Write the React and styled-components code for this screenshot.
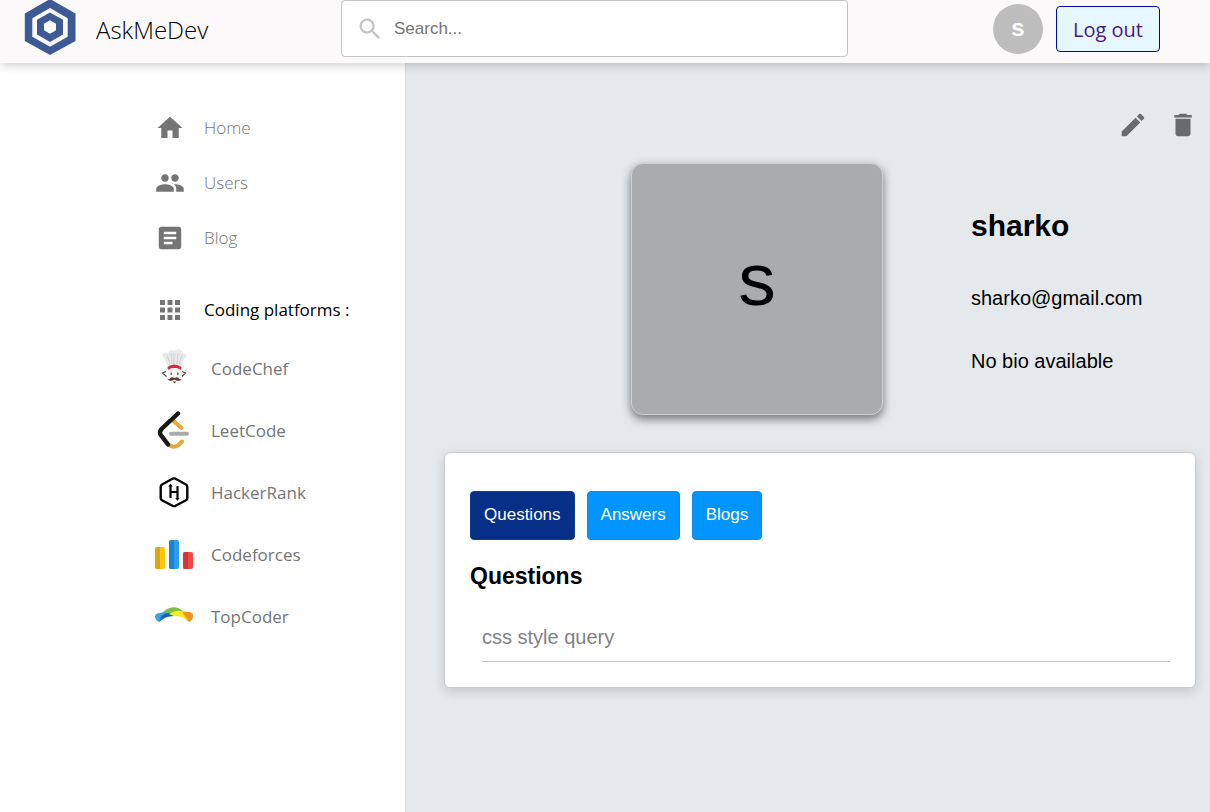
import React from "react";
import styled, { createGlobalStyle } from "styled-components";
import {
  MdHome, MdPeople, MdArticle, MdApps, MdEdit, MdDelete, MdSearch,
} from "react-icons/md";

const sans = `"Liberation Sans", Arial, sans-serif`;
const human = `"Segoe UI", "Open Sans", "Noto Sans", sans-serif`;

const GlobalStyle = createGlobalStyle`
  *, *::before, *::after { box-sizing: border-box; }
  body { margin: 0; background: #e5e9ec; font-family: ${sans}; color: #000; }
  h1, h2, p, ul { margin: 0; padding: 0; }
  ul { list-style: none; }
  a { color: inherit; text-decoration: none; }
  button { font-family: inherit; cursor: pointer; }
  svg { display: block; flex: none; }
`;

const Page = styled.div`
  display: flex;
  flex-direction: column;
  min-height: 100vh;
`;

const Header = styled.header`
  display: grid;
  grid-template-columns: 341fr 507fr 362fr;
  align-items: start;
  height: 63px;
  background: #fcf9fa;
  box-shadow: 0 2px 10px rgba(0, 0, 0, 0.2);
  z-index: 1;
`;

const Brand = styled.a`
  display: flex;
  align-items: flex-start;
  gap: 20px;
  padding-left: 24px;
  font-family: ${human};
  font-size: 24px;
  font-weight: 300;
  line-height: 60px;
`;

const SearchBox = styled.label`
  display: flex;
  align-items: center;
  gap: 10px;
  height: 57px;
  padding: 0 14px;
  background: #fff;
  border: 1px solid #c4c4c4;
  border-radius: 4px;
  color: #c4c4c4;
`;

const SearchInput = styled.input`
  flex: 1;
  min-width: 0;
  padding: 0;
  border: 0;
  outline: 0;
  background: none;
  font: 17px ${sans};
  color: #222;
  &::placeholder { color: #757575; opacity: 1; }
`;

const Account = styled.div`
  display: flex;
  justify-content: flex-end;
  gap: 13px;
  padding: 4px 50px 0 0;
`;

const AvatarBadge = styled.div`
  display: grid;
  place-items: center;
  width: 50px;
  height: 50px;
  border-radius: 50%;
  background: #bdbdbd;
  color: #fff;
  font-size: 24px;
  font-weight: 700;
  line-height: 26px;
  padding-bottom: 2px;
`;

const LogoutButton = styled.button`
  height: 46px;
  margin-top: 2px;
  padding: 0 16px;
  border: 1px solid #0808a0;
  border-radius: 4px;
  background: #e6f7ff;
  color: #45207c;
  && { font-family: ${human}; }
  font-size: 20px;
  white-space: nowrap;
`;

const Body = styled.div`
  flex: 1;
  display: grid;
  grid-template-columns: 406fr 804fr;
`;

const Sidebar = styled.nav`
  padding: 37px 0 0 155px;
  background: #fff;
  border-right: 1px solid #d8dcdf;
  font-family: ${human};
  color: #757575;
`;

const NavLink = styled.a`
  display: flex;
  align-items: center;
  gap: 19px;
  height: 55px;
  font-size: 17px;
  font-weight: 300;
`;

const SectionTitle = styled.div`
  display: flex;
  align-items: center;
  gap: 19px;
  height: 55px;
  margin-top: 17px;
  font-size: 17px;
  white-space: nowrap;
  span { color: #000; }
`;

const PlatformLink = styled.a`
  display: flex;
  align-items: center;
  gap: 18px;
  height: 62px;
  font-size: 17px;
`;

const Main = styled.main`
  padding: 47px 14px 40px 38px;
`;

const Actions = styled.div`
  display: flex;
  justify-content: flex-end;
  gap: 20px;
`;

const IconButton = styled.button`
  padding: 0;
  border: 0;
  background: none;
  color: #676b6e;
  & + & { margin-right: -2px; }
`;

const Profile = styled.section`
  display: flex;
  justify-content: flex-end;
  gap: 88px;
  margin: 23px 0 37px;
`;

const ProfilePicture = styled.div`
  display: grid;
  place-items: center;
  flex: none;
  width: 252px;
  height: 252px;
  padding-bottom: 20px;
  border: 1px solid #cfd1d2;
  border-radius: 12px;
  background: #aaabad;
  box-shadow: 0 4px 10px rgba(0, 0, 0, 0.5);
  font-size: 75px;
`;

const ProfileDetails = styled.div`
  display: flex;
  flex-direction: column;
  gap: 40px;
  width: 225px;
  padding-top: 46px;
  font-size: 20px;
  line-height: 23px;
`;

const Name = styled.h1`
  margin-bottom: 4px;
  font-size: 30px;
  line-height: 34px;
`;

const Card = styled.section`
  padding: 38px 25px 25px;
  background: #fff;
  border: 1px solid #c8cacc;
  border-radius: 6px;
  box-shadow: 0 4px 12px rgba(0, 0, 0, 0.14);
`;

const Tabs = styled.div`
  display: flex;
  gap: 12px;
`;

const Tab = styled.button`
  height: 49px;
  padding: 0 13px 2px;
  border: 1px solid ${(p) => (p.$active ? "#0b3f91" : "#0e8aea")};
  border-radius: 4px;
  background: ${(p) => (p.$active ? "#062f87" : "#0295ff")};
  color: #fff;
  font-size: 17px;
`;

const CardTitle = styled.h2`
  margin-top: 23px;
  font-size: 23px;
  line-height: 27px;
`;

const QuestionList = styled.ul`
  margin: 23px 0 0 12px;
`;

const Question = styled.li`
  padding: 13px 0 12px;
  border-bottom: 1px solid #c6c6c6;
  color: #828282;
  font-size: 20px;
  line-height: 23px;
`;

const BrandLogo = () => (
  <svg width="52" height="56" viewBox="0 0 52 56" aria-hidden="true">
    <path
      fill="#3d5a94"
      fillRule="evenodd"
      d="M26-1 51.500 13.500V41L26 55 .8 41V13.500ZM26 8 8.300 18.300V36.700L26 46.700 43.700 36.700V18.300Z"
    />
    <path
      fill="#3d5a94"
      fillRule="evenodd"
      d="M26 12.500 39 19.800V34.600L26 42 13 34.600V19.800ZM26 20.200 20 23.700V30.300L26 33.800 32 30.300V23.700Z"
    />
  </svg>
);

const CodeChefLogo = () => (
  <svg width="38" height="38" viewBox="0 0 38 38" aria-hidden="true">
    <path fill="#e9e9ec" d="M13 18 9 9C5 6 9 2 13 4 14 0 18 0 20 2 24-1 28 1 28 4 32 4 33 8 29 10L26 18Q19 14 13 18Z" />
    <path fill="none" stroke="#c6c7cd" strokeWidth=".7" d="m15 15-3-9m5 9-1-11m3 11V4m3 11 1-11m1 11 3-9" />
    <path fill="#d9283a" d="M12.500 18Q19 13 26.500 18L26 21Q19 17 13 21Z" />
    <path fill="#faf6f4" d="M13 21Q19 17 26 21V28Q25 33 19 33T13 28Z" />
    <path fill="none" stroke="#54433f" strokeWidth="1.100" d="M11 22.500 7.500 24 11.500 27.500M27 22.500l3.500 1.500L27 27.500" />
    <path fill="#77706e" d="M15.500 23.500h1.600V26h-1.600zM22 23.500h1.600V26H22z" />
    <path fill="#51413e" d="M19.500 29Q16 27 14.500 30 13 30.500 12 29.500 14 33.500 19.500 30.800 25 33.500 27 29.500 26 30.500 24.500 30 23 27 19.500 29ZM17.800 32.500h3.600l-1.800 2Z" />
  </svg>
);

const LeetCodeLogo = () => (
  <svg width="38" height="38" viewBox="0 0 38 38" fill="none" strokeLinecap="round" aria-hidden="true">
    <path stroke="#e3a83b" strokeWidth="4" d="m18 9.500 8.500 7.500M27 30.500 23.500 34Q18 38 13 33" />
    <path stroke="#181818" strokeWidth="4.400" d="M23 2.500 6.500 18Q3.500 21.500 6.500 25L13 33.500" />
    <path stroke="#aaa" strokeWidth="4" d="M16 22.700H32" />
  </svg>
);

const HackerRankLogo = () => (
  <svg width="38" height="38" viewBox="0 0 38 38" aria-hidden="true">
    <path fill="none" stroke="#050505" strokeWidth="2.400" strokeLinejoin="round" d="M17.500 5.700Q19 5 20.500 5.700L31 11.500Q32.300 12.300 32.300 14V25Q32.300 26.500 31 27.300L20.500 32.800Q19 33.500 17.500 32.800L7 27.300Q5.700 26.500 5.700 25V14Q5.700 12.300 7 11.500Z" />
    <path fill="none" stroke="#050505" strokeWidth="2.200" d="M15.500 12V25M22.500 13V26M15.500 19h7" />
    <path fill="#050505" d="m13.200 13.500 2.300-2.800 2.300 2.800ZM20.200 25l2.300 2.800 2.300-2.800Z" />
  </svg>
);

const CodeforcesLogo = () => (
  <svg width="38" height="38" viewBox="0 0 38 38" aria-hidden="true">
    <rect x="0" y="12" width="10" height="22" rx="2" fill="#fac70d" />
    <path fill="#dba90a" d="M2 12h3v22H2a2 2 0 0 1-2-2V14a2 2 0 0 1 2-2Z" />
    <rect x="14" y="5" width="10" height="29" rx="2" fill="#2c9ced" />
    <path fill="#1c82d2" d="M16 5h3v29h-3a2 2 0 0 1-2-2V7a2 2 0 0 1 2-2Z" />
    <rect x="28" y="17" width="10" height="17" rx="2" fill="#f04844" />
    <path fill="#d43737" d="M30 17h3v17h-3a2 2 0 0 1-2-2V19a2 2 0 0 1 2-2Z" />
  </svg>
);

const TopCoderLogo = () => (
  <svg width="38" height="38" viewBox="0 0 38 38" aria-hidden="true">
    <path fill="#38a5dc" d="M0 19Q1 16 5 16L13 14 4 25Q0 23 0 19Z" />
    <path fill="#1d62ad" d="M4 25Q6 17 14 15L19 19Q10 19 4 25Z" />
    <path fill="#82bd41" d="M8 15Q19 6 28 14.500L19 19Q14 15 8 15Z" />
    <path fill="#f8ed22" d="M14 17Q21 12 28 14.500L34 25Q26 18 19 19Z" />
    <path fill="#f39324" d="M27 14.500 35 15Q38 16 38 19 38 23 34 25 30 20 27 14.500Z" />
  </svg>
);

const links = [
  ["Home", MdHome],
  ["Users", MdPeople],
  ["Blog", MdArticle],
];

const platforms = [
  ["CodeChef", CodeChefLogo],
  ["LeetCode", LeetCodeLogo],
  ["HackerRank", HackerRankLogo],
  ["Codeforces", CodeforcesLogo],
  ["TopCoder", TopCoderLogo],
];

const tabs = ["Questions", "Answers", "Blogs"];

export default function App() {
  return (
    <Page>
      <GlobalStyle />
      <Header>
        <Brand href="#"><BrandLogo />AskMeDev</Brand>
        <SearchBox>
          <MdSearch size={28} />
          <SearchInput type="search" placeholder="Search..." aria-label="Search" />
        </SearchBox>
        <Account>
          <AvatarBadge>s</AvatarBadge>
          <LogoutButton type="button">Log out</LogoutButton>
        </Account>
      </Header>
      <Body>
        <Sidebar>
          {links.map(([label, Icon]) => (
            <NavLink href="#" key={label}><Icon size={30} />{label}</NavLink>
          ))}
          <SectionTitle><MdApps size={30} /><span>Coding platforms :</span></SectionTitle>
          {platforms.map(([label, Logo]) => (
            <PlatformLink href="#" key={label}><Logo />{label}</PlatformLink>
          ))}
        </Sidebar>
        <Main>
          <Actions>
            <IconButton type="button" aria-label="Edit profile"><MdEdit size={30} /></IconButton>
            <IconButton type="button" aria-label="Delete profile"><MdDelete size={30} /></IconButton>
          </Actions>
          <Profile>
            <ProfilePicture>s</ProfilePicture>
            <ProfileDetails>
              <Name>sharko</Name>
              <p>sharko@gmail.com</p>
              <p>No bio available</p>
            </ProfileDetails>
          </Profile>
          <Card>
            <Tabs>
              {tabs.map((label, i) => (
                <Tab type="button" key={label} $active={i === 0}>{label}</Tab>
              ))}
            </Tabs>
            <CardTitle>Questions</CardTitle>
            <QuestionList>
              <Question><a href="#">css style query</a></Question>
            </QuestionList>
          </Card>
        </Main>
      </Body>
    </Page>
  );
}
